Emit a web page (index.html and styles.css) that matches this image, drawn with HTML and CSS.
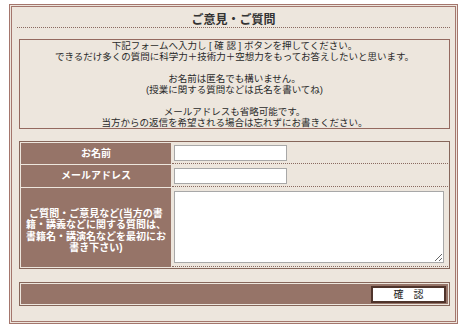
FILE: index.html
```html
<!DOCTYPE html>
<html lang="ja">

<head>
  <meta charset="UTF-8">
  <meta name="viewport" content="width=device-width, initial-scale=1.0">
  <title>ご意見・ご質問</title>
  <link rel="stylesheet" href="styles.css">
</head>

<body>
  <div class="frame">
    <h1 class="title">ご意見・ご質問</h1>

    <div class="intro">
      <p>
        下記フォームへ入力し [ 確 認 ] ボタンを押してください。<br>
        できるだけ多くの質問に科学力＋技術力＋空想力をもってお答えしたいと思います。
      </p>
      <p>
        お名前は匿名でも構いません。<br>
        (授業に関する質問などは氏名を書いてね)
      </p>
      <p>
        メールアドレスも省略可能です。<br>
        当方からの返信を希望される場合は忘れずにお書きください。
      </p>
    </div>

    <form>
      <table class="form-table">
        <tr class="row-name">
          <th>お名前</th>
          <td><input type="text" class="text-input"></td>
        </tr>
        <tr class="row-mail">
          <th>メールアドレス</th>
          <td><input type="text" class="text-input"></td>
        </tr>
        <tr class="row-body">
          <th>ご質問・ご意見など(当方の書<br>籍・講義などに関する質問は、<br>書籍名・講演名などを最初にお<br>書き下さい)</th>
          <td><textarea class="text-area"></textarea></td>
        </tr>
      </table>

      <table class="submit-table">
        <tr>
          <td><input type="button" value="確　認" class="button"></td>
        </tr>
      </table>
    </form>
  </div>
</body>

</html>
```

FILE: styles.css
```css
body {
  margin: 0;
  background: #fff;
  font-family: "Liberation Sans", "Noto Sans CJK JP", sans-serif;
  color: #2a2a2a;
}

.frame {
  box-sizing: border-box;
  width: 449px;
  height: 320px;
  margin: 4px 0 0 9px;
  padding: 0 5px 0 7px;
  border: 3px double #a4766d;
  background: #ede6dd;
}

.title {
  margin: 0 0 11px -2px;
  padding-top: 6px;
  height: 14px;
  line-height: 14px;
  font-size: 12px;
  font-weight: bold;
  text-align: center;
  color: #333;
  border-bottom: 1px dotted #8a6a60;
}

.intro {
  width: 431px;
  height: 90px;
  box-sizing: border-box;
  border: 1px solid #94695f;
  font-size: 9.5px;
  line-height: 11px;
  text-align: center;
}

.intro p {
  margin: 0 0 11px;
}

.intro p:last-child {
  margin: 0;
}

.form-table {
  width: 431px;
  margin-top: 12px;
  border: 1px solid #86665a;
  border-spacing: 1px;
  table-layout: fixed;
}

.form-table th {
  width: 150px;
  padding: 0;
  background: #967468;
  color: #fff;
  font-size: 10px;
  line-height: 11.5px;
  font-weight: bold;
  text-align: center;
}

.form-table td {
  padding: 0 0 0 2px;
  border-bottom: 1px dotted #8a6a60;
  vertical-align: middle;
}

.row-name th,
.row-name td {
  height: 20px;
}

.row-mail th,
.row-mail td {
  height: 21px;
}

.row-body th,
.row-body td {
  height: 78px;
}

.row-body th {
  padding-top: 6px;
  height: 72px;
}

.text-input {
  display: block;
  width: 113px;
  height: 16px;
  box-sizing: border-box;
  border: 1px solid #a8a8a8;
  background: #fff;
}

.text-area {
  display: block;
  width: 270px;
  height: 72px;
  box-sizing: border-box;
  margin: -1px 0 0;
  border: 1px solid #a8a8a8;
  background: #fff;
}

.submit-table {
  width: 431px;
  margin-top: 13px;
  border: 1px solid #86665a;
  border-spacing: 1px;
}

.submit-table td {
  height: 20px;
  padding: 0 2px 0 0;
  background: #967468;
  text-align: right;
}

.button {
  width: 75px;
  height: 17px;
  padding: 0;
  border: 2px solid #4f342b;
  background: #fff;
  color: #222;
  font-family: "Liberation Sans", "Noto Sans CJK JP", sans-serif;
  font-size: 10px;
  line-height: 12px;
  vertical-align: middle;
}
```
